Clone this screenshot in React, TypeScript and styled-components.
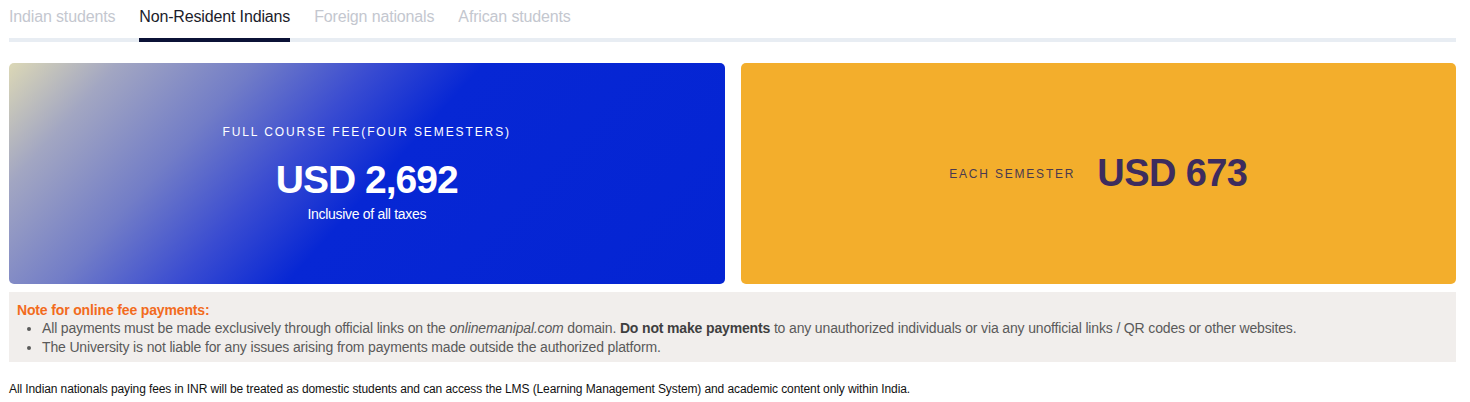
import styled, { createGlobalStyle } from 'styled-components';

const GlobalStyle = createGlobalStyle`
  body {
    margin: 0;
    background: #ffffff;
    font-family: "Liberation Sans", Arial, sans-serif;
  }
`;

const tabs = ['Indian students', 'Non-Resident Indians', 'Foreign nationals', 'African students'];

const App = () => {
  return (
    <Page>
      <GlobalStyle />
      <TabBar>
        {tabs.map((t, i) => (
          <Tab key={t} active={i === 1}>
            {t}
          </Tab>
        ))}
      </TabBar>
      <Cards>
        <TotalCard>
          <Label>FULL COURSE FEE(FOUR SEMESTERS)</Label>
          <BigPrice>USD 2,692</BigPrice>
          <SubText>Inclusive of all taxes</SubText>
        </TotalCard>
        <SemesterCard>
          <SemLabel>EACH SEMESTER</SemLabel>
          <SemPrice>USD 673</SemPrice>
        </SemesterCard>
      </Cards>
      <NoteBox>
        <NoteTitle>Note for online fee payments:</NoteTitle>
        <NoteList>
          <li>
            All payments must be made exclusively through official links on the{' '}
            <em>onlinemanipal.com</em> domain. <strong>Do not make payments</strong> to any
            unauthorized individuals or via any unofficial links / QR codes or other websites.
          </li>
          <li>
            The University is not liable for any issues arising from payments made outside the
            authorized platform.
          </li>
        </NoteList>
      </NoteBox>
      <Footer>
        All Indian nationals paying fees in INR will be treated as domestic students and can access
        the LMS (Learning Management System) and academic content only within India.
      </Footer>
    </Page>
  );
};

const Page = styled.div`
  width: 1447px;
  margin-left: 9px;
`;

const TabBar = styled.div`
  display: flex;
  gap: 24px;
  border-bottom: 4px solid #e8edf3;
  height: 38px;
  box-sizing: content-box;
`;

const Tab = styled.div<{ active?: boolean }>`
  position: relative;
  font-size: 16px;
  letter-spacing: -0.15px;
  line-height: 34px;
  color: ${({ active }) => (active ? '#1b1c2b' : '#c4c7cf')};
  &::after {
    content: '';
    position: absolute;
    left: 0;
    right: 0;
    bottom: -4px;
    height: 4px;
    background: ${({ active }) => (active ? '#0b1236' : 'transparent')};
  }
`;

const Cards = styled.div`
  display: grid;
  grid-template-columns: 1fr 1fr;
  gap: 16px;
  margin-top: 21px;
`;

const Card = styled.div`
  height: 221px;
  border-radius: 5px;
  display: flex;
  align-items: center;
  justify-content: center;
`;

const TotalCard = styled(Card)`
  flex-direction: column;
  color: #ffffff;
  background: linear-gradient(
    132deg,
    #dcd8b6 0%,
    #a2a6c2 12%,
    #727dc7 27%,
    #3a4cd1 40%,
    #0727d4 52%,
    #0424d3 100%
  );
`;

const Label = styled.div`
  font-size: 12px;
  letter-spacing: 1.9px;
`;

const BigPrice = styled.div`
  font-size: 39px;
  font-weight: 700;
  letter-spacing: -1px;
  margin-top: 19px;
  line-height: 44px;
`;

const SubText = styled.div`
  font-size: 14px;
  letter-spacing: -0.3px;
  margin-top: 4px;
`;

const SemesterCard = styled(Card)`
  background: #f3ae2c;
  gap: 22px;
  color: #3b2c58;
`;

const SemLabel = styled.div`
  font-size: 12px;
  letter-spacing: 1.8px;
  color: #4a3a4f;
`;

const SemPrice = styled.div`
  font-size: 38px;
  font-weight: 700;
  letter-spacing: -0.6px;
  color: #3d2c5e;
`;

const NoteBox = styled.div`
  margin-top: 8px;
  background: #f1eeec;
  padding: 9px 8px 5px;
  font-size: 14px;
  letter-spacing: -0.15px;
  color: #5a5a5a;
`;

const NoteTitle = styled.div`
  color: #f26b1d;
  font-weight: 700;
  line-height: 18px;
`;

const NoteList = styled.ul`
  margin: 0;
  padding-left: 25px;
  line-height: 19px;
  strong {
    color: #3f3f3f;
  }
`;

const Footer = styled.div`
  font-size: 12px;
  letter-spacing: -0.1px;
  color: #111111;
  margin-top: 20px;
`;

export default App;
